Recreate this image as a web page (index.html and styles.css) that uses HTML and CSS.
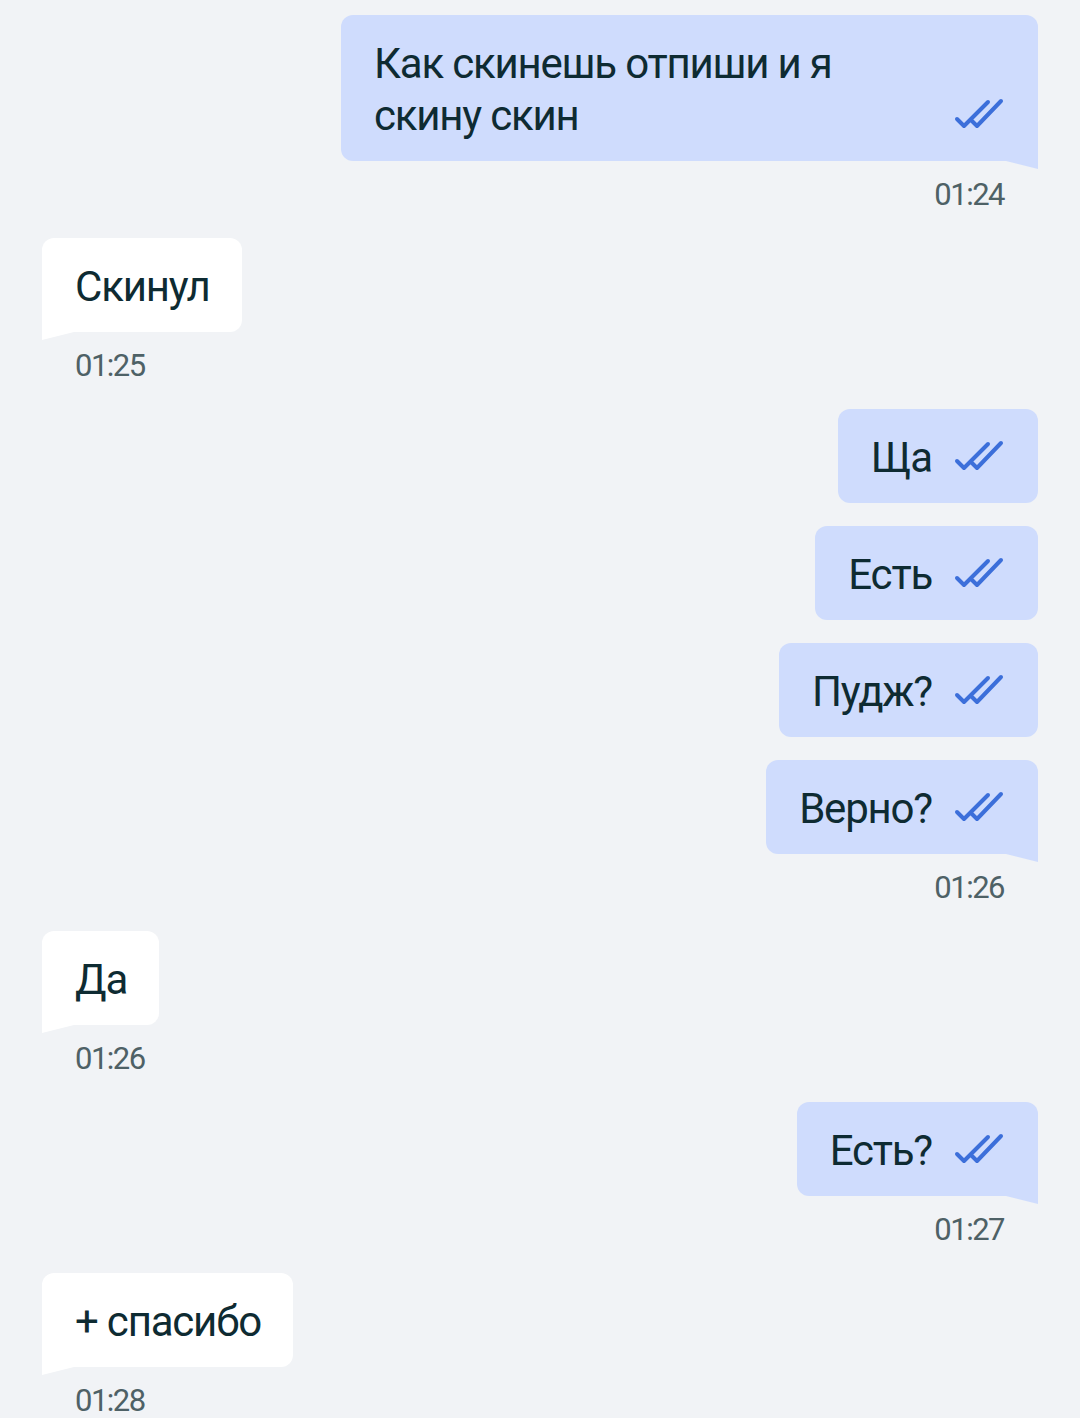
FILE: index.html
```html
<!DOCTYPE html>
<html lang="ru">
<head>
  <meta charset="UTF-8">
  <meta name="viewport" content="width=device-width, initial-scale=1.0">
  <title>Чат</title>
  <link rel="stylesheet" href="styles.css">
</head>
<body>
  <div class="chat">
    <div class="msg out tail">
      <div class="bubble">
        <span class="text">Как скинешь отпиши и я скину скин</span>
        <svg class="check" viewBox="0 0 50 32"><path d="M3 21 L10 28 L34 4 M17 22 L23 28 L47 3"/></svg>
      </div>
      <div class="time">01:24</div>
    </div>

    <div class="msg in tail">
      <div class="bubble"><span class="text">Скинул</span></div>
      <div class="time">01:25</div>
    </div>

    <div class="msg out">
      <div class="bubble">
        <span class="text">Ща</span>
        <svg class="check" viewBox="0 0 50 32"><path d="M3 21 L10 28 L34 4 M17 22 L23 28 L47 3"/></svg>
      </div>
    </div>
    <div class="msg out">
      <div class="bubble">
        <span class="text">Есть</span>
        <svg class="check" viewBox="0 0 50 32"><path d="M3 21 L10 28 L34 4 M17 22 L23 28 L47 3"/></svg>
      </div>
    </div>
    <div class="msg out">
      <div class="bubble">
        <span class="text">Пудж?</span>
        <svg class="check" viewBox="0 0 50 32"><path d="M3 21 L10 28 L34 4 M17 22 L23 28 L47 3"/></svg>
      </div>
    </div>
    <div class="msg out tail">
      <div class="bubble">
        <span class="text">Верно?</span>
        <svg class="check" viewBox="0 0 50 32"><path d="M3 21 L10 28 L34 4 M17 22 L23 28 L47 3"/></svg>
      </div>
      <div class="time">01:26</div>
    </div>

    <div class="msg in tail">
      <div class="bubble"><span class="text">Да</span></div>
      <div class="time">01:26</div>
    </div>

    <div class="msg out tail">
      <div class="bubble">
        <span class="text">Есть?</span>
        <svg class="check" viewBox="0 0 50 32"><path d="M3 21 L10 28 L34 4 M17 22 L23 28 L47 3"/></svg>
      </div>
      <div class="time">01:27</div>
    </div>

    <div class="msg in tail">
      <div class="bubble"><span class="text">+ спасибо</span></div>
      <div class="time">01:28</div>
    </div>
  </div>
</body>
</html>
```

FILE: styles.css
```css
body {
  margin: 0;
  background-color: #f1f3f6;
  font-family: Roboto, "Noto Sans", sans-serif;
  color: #0e2b32;
}

.chat {
  display: flex;
  flex-direction: column;
  gap: 23px;
  padding: 15px 42px 0 42px;
}

.msg {
  display: flex;
  flex-direction: column;
}

.msg.out {
  align-items: flex-end;
}

.msg.in {
  align-items: flex-start;
}

.bubble {
  position: relative;
  display: flex;
  align-items: flex-end;
  gap: 22px;
  max-width: 697px;
  box-sizing: border-box;
  padding: 23px 34px 19px 33px;
  border-radius: 12px;
}

.out .bubble {
  background-color: #cfdcfd;
}

.in .bubble {
  background-color: #ffffff;
  padding-right: 32px;
}

.text {
  font-size: 42px;
  line-height: 52px;
  letter-spacing: -1.2px;
}

.check {
  flex-shrink: 0;
  width: 50px;
  height: 32px;
  margin-bottom: 12px;
  fill: none;
  stroke: #3c6fda;
  stroke-width: 4;
  stroke-linecap: round;
  stroke-linejoin: round;
}

/* little tail on the last bubble of a group */
.out.tail .bubble {
  border-bottom-right-radius: 0;
}

.out.tail .bubble::after {
  content: "";
  position: absolute;
  right: 0;
  bottom: -8px;
  width: 32px;
  height: 8px;
  background-color: #cfdcfd;
  clip-path: polygon(0 0, 100% 0, 100% 100%);
}

.in.tail .bubble {
  border-bottom-left-radius: 0;
}

.in.tail .bubble::after {
  content: "";
  position: absolute;
  left: 0;
  bottom: -8px;
  width: 32px;
  height: 8px;
  background-color: #ffffff;
  clip-path: polygon(0 0, 100% 0, 0 100%);
}

.time {
  padding-top: 14px;
  font-size: 31px;
  line-height: 40px;
  color: #4e6166;
  letter-spacing: -1.5px;
}

.out .time {
  padding-right: 34px;
}

.in .time {
  padding-left: 33px;
}
```
